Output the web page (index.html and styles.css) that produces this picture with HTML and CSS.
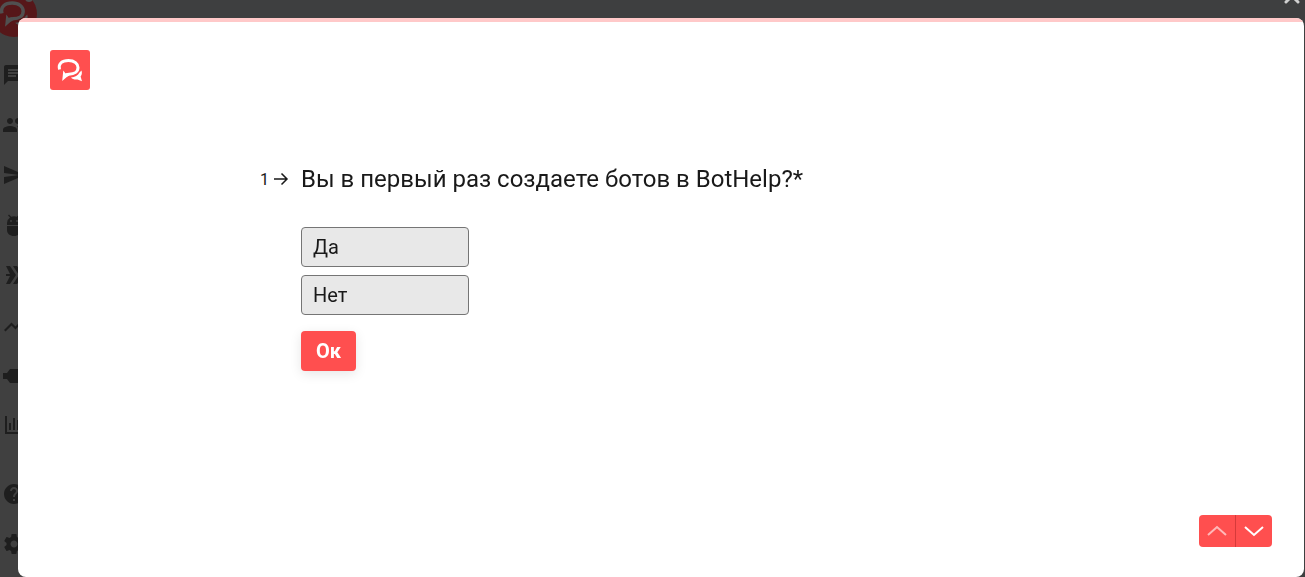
FILE: index.html
```html
<!DOCTYPE html>
<html lang="ru">
	<head>
		<meta charset="UTF-8" />
		<meta name="viewport" content="width=device-width, initial-scale=1.0" />
		<title>BotHelp</title>
		<link rel="stylesheet" href="styles.css">
	</head>
	<body>
		<nav class="sidebar">
			<a class="sidebar-logo" href="#" aria-label="BotHelp">
				<svg viewBox="0 0 40 40">
					<path class="brand-line" d="M9.500 19.500C8 13.500 12 10.500 18.500 10.500C24.500 10.500 28 13.800 28 17.500C28 21.500 24.500 24.200 19 24.200C17 24.200 15.500 25 14.500 26.500" />
					<path class="brand-fill" d="M13.300 20.500L15.500 23.500L19 23L19 25.700L16.800 27L12.200 31ZM21 27.500C25 27.400 28 25.500 29.500 22.500L31.500 20.500C32.300 23 31.800 25 30.600 26.500L32 31.300L27.500 29.400C25 29.900 22.500 29.200 21 27.500Z" />
				</svg>
				<span class="sidebar-badge"></span>
			</a>
			<a class="sidebar-item" href="#" aria-label="Диалоги">
				<svg viewBox="0 0 24 24"><path d="M20 2H4c-1.100 0-2 .900-2 2v18l4-4h14c1.100 0 2-.900 2-2V4c0-1.100-.900-2-2-2zM6 9h12v2H6V9zm8 5H6v-2h8v2zm4-6H6V6h12v2z" /></svg>
			</a>
			<a class="sidebar-item" href="#" aria-label="Подписчики">
				<svg viewBox="0 0 24 24"><path d="M16 11c1.660 0 3-1.340 3-3s-1.340-3-3-3-3 1.340-3 3 1.340 3 3 3zm-8 0c1.660 0 3-1.340 3-3S9.660 5 8 5 5 6.340 5 8s1.340 3 3 3zm0 2c-2.330 0-7 1.170-7 3.500V19h14v-2.500c0-2.330-4.670-3.500-7-3.500zm8 0c-.3 0-.6 0-1 .05 1.200.84 2 1.970 2 3.450V19h6v-2.500c0-2.330-4.670-3.500-7-3.500z" /></svg>
			</a>
			<a class="sidebar-item" href="#" aria-label="Рассылки">
				<svg viewBox="0 0 24 24"><path d="M2 21l21-9L2 3v7l15 2-15 2z" /></svg>
			</a>
			<a class="sidebar-item" href="#" aria-label="Боты">
				<svg viewBox="0 0 24 24"><path d="M5 13v4c0 3.800 3 6 7 6s7-2.200 7-6v-4H5zM16 4.500L18 2.500 17 1.500 14.800 3.700a8 8 0 0 0-5.600 0L7 1.500 6 2.500 8 4.500A7 7 0 0 0 5 10v2h14v-2a7 7 0 0 0-3-5.500zM9 9a1 1 0 1 1 0-2 1 1 0 0 1 0 2zm6 0a1 1 0 1 1 0-2 1 1 0 0 1 0 2z" /></svg>
			</a>
			<a class="sidebar-item" href="#" aria-label="Автоворонки">
				<svg viewBox="0 0 24 24"><path d="M4 3h4l6 9-6 9H4l4-8H4v-2h4zM11 3h4l7 9-7 9h-4l6-9z" /></svg>
			</a>
			<a class="sidebar-item" href="#" aria-label="Рост">
				<svg viewBox="0 0 24 24"><path d="M3.500 18.500L2 17l7.500-7.500 4 4L20.600 6 22 7.400l-8.500 9.100-4-4z" /></svg>
			</a>
			<a class="sidebar-item" href="#" aria-label="Интеграции">
				<svg viewBox="0 0 24 24"><path d="M1 10h4l3-4h15v14H8l-3-4H1z" /></svg>
			</a>
			<a class="sidebar-item" href="#" aria-label="Аналитика">
				<svg viewBox="0 0 24 24"><path d="M3 3h2v16h17v2H3zM7 10h2v7H7zM11 5h2v12h-2zM15 7h2v10h-2zM19 12h2v5h-2z" /></svg>
			</a>
			<a class="sidebar-item sidebar-item-help" href="#" aria-label="Помощь">
				<svg viewBox="0 0 24 24"><path d="M12 2C6.480 2 2 6.480 2 12s4.480 10 10 10 10-4.480 10-10S17.520 2 12 2zm1 17h-2v-2h2v2zm2.070-7.750l-.9.920C13.450 12.900 13 13.500 13 15h-2v-.5c0-1.100.450-2.100 1.170-2.830l1.240-1.260c.370-.360.590-.860.590-1.410 0-1.100-.9-2-2-2s-2 .9-2 2H8c0-2.210 1.790-4 4-4s4 1.790 4 4c0 .880-.360 1.680-.930 2.250z" /></svg>
			</a>
			<a class="sidebar-item" href="#" aria-label="Настройки">
				<svg viewBox="0 0 24 24"><path d="M19.430 12.980c.04-.32.07-.64.07-.98s-.03-.66-.07-.98l2.110-1.650c.19-.15.24-.42.12-.64l-2-3.460c-.12-.22-.39-.3-.61-.22l-2.490 1c-.52-.4-1.080-.73-1.690-.98l-.38-2.650C14.460 2.180 14.250 2 14 2h-4c-.25 0-.46.18-.49.42l-.38 2.650c-.61.25-1.170.59-1.690.98l-2.490-1c-.23-.09-.49 0-.61.22l-2 3.460c-.13.22-.07.49.12.64l2.110 1.650c-.04.32-.07.65-.07.98s.03.66.07.98l-2.110 1.650c-.19.15-.24.42-.12.64l2 3.460c.12.22.39.3.61.22l2.490-1c.52.4 1.080.73 1.690.98l.38 2.650c.03.24.24.42.49.42h4c.25 0 .46-.18.49-.42l.38-2.650c.61-.25 1.170-.59 1.690-.98l2.490 1c.23.09.49 0 .61-.22l2-3.460c.12-.22.07-.49-.12-.64l-2.110-1.650zM12 15.500c-1.930 0-3.500-1.570-3.500-3.500s1.570-3.500 3.500-3.500 3.500 1.570 3.500 3.500-1.570 3.500-3.500 3.500z" /></svg>
			</a>
		</nav>

		<button class="close" type="button" aria-label="Закрыть">
			<svg viewBox="0 0 16 16"><path d="M2 2L14 14M14 2L2 14" /></svg>
		</button>

		<main class="modal">
			<div class="progress"></div>
			<header class="modal-header">
				<svg class="brand" viewBox="0 0 40 40">
					<path class="brand-line" d="M9.500 19.500C8 13.500 12 10.500 18.500 10.500C24.500 10.500 28 13.800 28 17.500C28 21.500 24.500 24.200 19 24.200C17 24.200 15.500 25 14.500 26.500" />
					<path class="brand-fill" d="M13.300 20.500L15.500 23.500L19 23L19 25.700L16.800 27L12.200 31ZM21 27.500C25 27.400 28 25.500 29.500 22.500L31.500 20.500C32.300 23 31.800 25 30.600 26.500L32 31.300L27.500 29.400C25 29.900 22.500 29.200 21 27.500Z" />
				</svg>
			</header>
			<form class="question">
				<div class="question-number">
					<span>1</span>
					<svg viewBox="0 0 16 16"><path d="M1 8H14M8.500 2.500L14 8L8.500 13.500" /></svg>
				</div>
				<div class="question-body">
					<h1>Вы в первый раз создаете ботов в BotHelp?*</h1>
					<div class="choices">
						<button class="choice" type="button">Да</button>
						<button class="choice" type="button">Нет</button>
					</div>
					<button class="submit" type="submit">Ок</button>
				</div>
			</form>
			<footer class="modal-footer">
				<button class="step" type="button" aria-label="Назад" disabled>
					<svg viewBox="0 0 20 12"><path d="M1 10L10 2L19 10" /></svg>
				</button>
				<button class="step" type="button" aria-label="Далее">
					<svg viewBox="0 0 20 12"><path d="M1 2L10 10L19 2" /></svg>
				</button>
			</footer>
		</main>
	</body>
</html>
```

FILE: styles.css
```css
* {
	box-sizing: border-box;
}

body {
	margin: 0;
	height: 100vh;
	overflow: hidden;
	background: #3e3f40;
	color: #191919;
	font-family: Roboto, "Noto Sans", sans-serif;
}

button {
	font-family: inherit;
	cursor: pointer;
}

.sidebar {
	display: flex;
	flex-direction: column;
	width: 50px;
	height: 100%;
	background: #404040;
}

.sidebar-logo {
	position: relative;
	display: block;
	width: 46px;
	height: 46px;
	margin: -9px 0 13px -9px;
	border-radius: 50%;
	background: #561719;
}

.sidebar-logo svg {
	display: block;
	width: 46px;
}

.sidebar-logo .brand-line {
	stroke: #505050;
}

.sidebar-logo .brand-fill {
	fill: #505050;
}

.sidebar-badge {
	position: absolute;
	top: 3px;
	right: 4px;
	width: 8px;
	height: 8px;
	border-radius: 50%;
	background: #505050;
}

.sidebar-item {
	display: flex;
	align-items: center;
	flex-shrink: 0;
	height: 50px;
	padding-left: 2px;
}

.sidebar-item-help {
	margin-top: 19px;
}

.sidebar-item svg {
	width: 24px;
	height: 24px;
	fill: #1e1e1e;
}

/* close cross sits above the modal corner */
.close {
	position: fixed;
	top: -12px;
	right: 5px;
	width: 16px;
	height: 16px;
	padding: 0;
	border: none;
	background: none;
}

.close svg {
	display: block;
	width: 16px;
	height: 16px;
	fill: none;
	stroke: #d0d0d0;
	stroke-width: 3;
	stroke-linecap: round;
}

.modal {
	position: fixed;
	top: 18px;
	right: 1px;
	bottom: 0;
	left: 18px;
	display: flex;
	flex-direction: column;
	overflow: hidden;
	border-radius: 8px;
	background: #fff;
}

.progress {
	flex-shrink: 0;
	height: 4px;
	background: #ffc9c9;
}

.modal-header {
	padding: 28px 32px 0;
}

.brand {
	display: block;
	width: 40px;
	height: 40px;
	border-radius: 3px;
	background: #ff4f4f;
}

.brand-line {
	fill: none;
	stroke: #fff;
	stroke-width: 3;
}

.brand-fill {
	fill: #fff;
}

.question {
	display: flex;
	flex: 1;
	gap: 12px;
	width: 100%;
	max-width: 802px;
	margin: 0 auto;
	padding: 73px 0 24px;
}

.question-number {
	display: flex;
	align-items: center;
	gap: 4px;
	height: 32px;
	font-size: 16px;
}

.question-number svg {
	width: 16px;
	height: 16px;
	fill: none;
	stroke: #191919;
	stroke-width: 1.5;
}

.question-body h1 {
	margin: 0 0 32px;
	font-size: 24px;
	font-weight: 400;
	line-height: 32px;
}

.choices {
	display: flex;
	flex-direction: column;
	gap: 8px;
	width: 168px;
	margin-bottom: 16px;
}

.choice {
	height: 40px;
	padding: 0 11px;
	border: 1px solid #757575;
	border-radius: 4px;
	background: #e8e8e8;
	color: #191919;
	font-size: 20px;
	text-align: left;
}

.submit {
	height: 40px;
	padding: 0 15px;
	border: none;
	border-radius: 4px;
	background: #ff4f4f;
	box-shadow: 0 3px 12px rgba(0, 0, 0, 0.1);
	color: #fff;
	font-size: 20px;
	font-weight: 700;
}

.modal-footer {
	display: flex;
	justify-content: flex-end;
	padding: 0 32px 30px;
}

.step {
	display: flex;
	align-items: center;
	justify-content: center;
	width: 36px;
	height: 32px;
	padding: 0;
	border: none;
	border-radius: 4px 0 0 4px;
	background: #ff4f4f;
}

.step + .step {
	width: 37px;
	border-left: 1px solid #d63a3a;
	border-radius: 0 4px 4px 0;
}

.step svg {
	width: 20px;
	height: 12px;
	fill: none;
	stroke: #fff;
	stroke-width: 2;
}

.step:disabled svg {
	opacity: 0.6;
}
```
